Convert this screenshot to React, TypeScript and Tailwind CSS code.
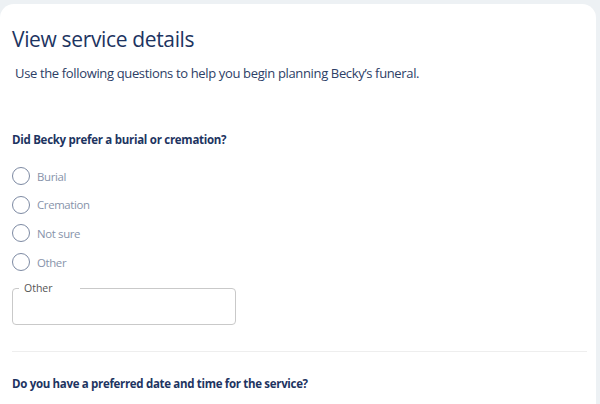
import React, { useState } from 'react';

const options = ['Burial', 'Cremation', 'Not sure', 'Other'];

const RadioOption = ({ label, checked, onChange }: { label: string; checked: boolean; onChange: () => void }) => (
    <label className="flex items-center gap-[7px] h-[28.6px] cursor-pointer">
        <span className="w-[18px] h-[18px] rounded-full border-[1.5px] border-[#7d8aa3] flex items-center justify-center">
            {checked && <span className="w-[9px] h-[9px] rounded-full bg-[#1d3461]" />}
        </span>
        <input type="radio" className="hidden" checked={checked} onChange={onChange} />
        <span className="text-[11.4px] tracking-[-0.35px] text-[#8793aa]">{label}</span>
    </label>
);

export default function App() {
    const [choice, setChoice] = useState('');
    return (
        <div className="min-h-[404px] bg-[#edf1f4] pt-[4px] pr-[4px]" style={{ fontFamily: '"Open Sans", sans-serif' }}>
            <div className="bg-white rounded-t-[14px] min-h-[400px] pl-[12px] pr-[9px] pt-[21px]">
                <h1 className="text-[21px] leading-[28px] tracking-[-0.35px] text-[#1d3461]">View service details</h1>
                <p className="mt-[11px] ml-[3px] text-[13px] leading-[18px] tracking-[-0.35px] text-[#2d4066]">
                    Use the following questions to help you begin planning Becky’s funeral.
                </p>

                <h2 className="mt-[50px] text-[11.5px] leading-[16px] tracking-[-0.28px] font-bold text-[#1d3461]">Did Becky prefer a burial or cremation?</h2>
                <div className="mt-[14px] flex flex-col">
                    {options.map((o) => (
                        <RadioOption key={o} label={o} checked={choice === o} onChange={() => setChoice(o)} />
                    ))}
                </div>

                <fieldset className="mt-[6px] w-[224px] h-[43px] border border-[#c9c9c9] rounded-[4px] px-[6px]">
                    <legend className="pl-[5px] pr-[27px] text-[10.5px] leading-[12px] text-[#555]">Other</legend>
                </fieldset>

                <div className="mt-[26px] border-t border-[#eeeeee]" />

                <h2 className="mt-[24px] text-[11.5px] leading-[16px] tracking-[-0.32px] font-bold text-[#1d3461]">Do you have a preferred date and time for the service?</h2>
            </div>
        </div>
    );
}
